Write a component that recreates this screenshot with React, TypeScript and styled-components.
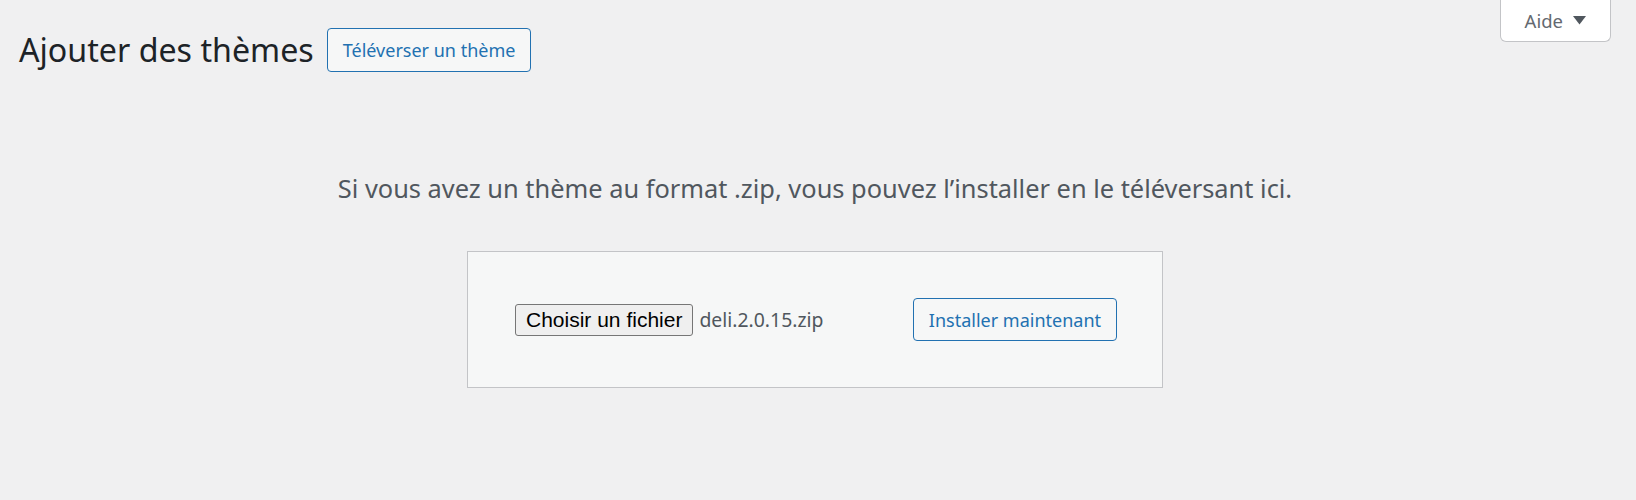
import React from 'react';
import styled, { createGlobalStyle } from 'styled-components';

const GlobalStyle = createGlobalStyle`
  html, body {
    margin: 0;
    padding: 0;
    background: #f0f0f1;
  }
  body {
    font-family: "Segoe UI", "Noto Sans", "Open Sans", sans-serif;
    color: #3c434a;
  }
`;

const Page = styled.div`
  min-height: 500px;
  box-sizing: border-box;
`;

const TopBar = styled.div`
  display: flex;
  justify-content: space-between;
  align-items: flex-start;
  padding: 0 25px 0 19px;
`;

const HeadingRow = styled.div`
  display: flex;
  align-items: center;
  gap: 13px;
  margin-top: 28px;
`;

const Title = styled.h1`
  margin: 0;
  font-size: 32.2px;
  font-weight: 400;
  line-height: 44px;
  color: #1d2327;
`;

const OutlineButton = styled.button<{ $height: number }>`
  height: ${p => p.$height}px;
  box-sizing: border-box;
  padding: 0 15px;
  background: #f6f7f7;
  border: 1px solid #2271b1;
  border-radius: 4px;
  color: #2271b1;
  font-family: inherit;
  font-size: 18px;
  line-height: 1;
  cursor: pointer;
`;

const HelpTab = styled.button`
  display: flex;
  align-items: center;
  gap: 10px;
  height: 42px;
  box-sizing: border-box;
  padding: 0 24px;
  background: #fff;
  border: 1px solid #c3c4c7;
  border-top: none;
  border-radius: 0 0 6px 6px;
  color: #646970;
  font-family: inherit;
  font-size: 18.5px;
`;

const Main = styled.div`
  display: flex;
  flex-direction: column;
  align-items: center;
  padding: 0 22px 0 16px;
`;

const Help = styled.p`
  margin: 96px 0 0;
  font-size: 25.4px;
  line-height: 40px;
  color: #50575e;
  text-align: center;
`;

const UploadForm = styled.form`
  margin-top: 43px;
  width: 696px;
  height: 137px;
  box-sizing: border-box;
  padding: 0 45px 0 47px;
  display: flex;
  justify-content: space-between;
  align-items: center;
  background: #f6f7f7;
  border: 1px solid #c3c4c7;
`;

const FilePicker = styled.div`
  display: flex;
  align-items: center;
  gap: 6px;
`;

const NativeButton = styled.button`
  height: 32px;
  box-sizing: border-box;
  padding: 0 10px;
  background: #efefef;
  border: 1px solid #767676;
  border-radius: 3px;
  color: #000;
  font-family: "Liberation Sans", Arial, sans-serif;
  font-size: 21px;
  line-height: 1;
`;

const FileName = styled.span`
  font-size: 19.4px;
  color: #50575e;
`;

function Caret() {
  return (
    <svg width="13" height="9" viewBox="0 0 13 9" aria-hidden="true">
      <path d="M0 0 H13 L6.5 8.5 Z" fill="#50575e" />
    </svg>
  );
}

export default function App() {
  return (
    <Page>
      <GlobalStyle />
      <TopBar>
        <HeadingRow>
          <Title>Ajouter des thèmes</Title>
          <OutlineButton $height={44} type="button">Téléverser un thème</OutlineButton>
        </HeadingRow>
        <HelpTab type="button">
          Aide <Caret />
        </HelpTab>
      </TopBar>
      <Main>
        <Help>Si vous avez un thème au format .zip, vous pouvez l’installer en le téléversant ici.</Help>
        <UploadForm onSubmit={e => e.preventDefault()}>
          <FilePicker>
            <NativeButton type="button">Choisir un fichier</NativeButton>
            <FileName>deli.2.0.15.zip</FileName>
          </FilePicker>
          <OutlineButton $height={43} type="submit">Installer maintenant</OutlineButton>
        </UploadForm>
      </Main>
    </Page>
  );
}
